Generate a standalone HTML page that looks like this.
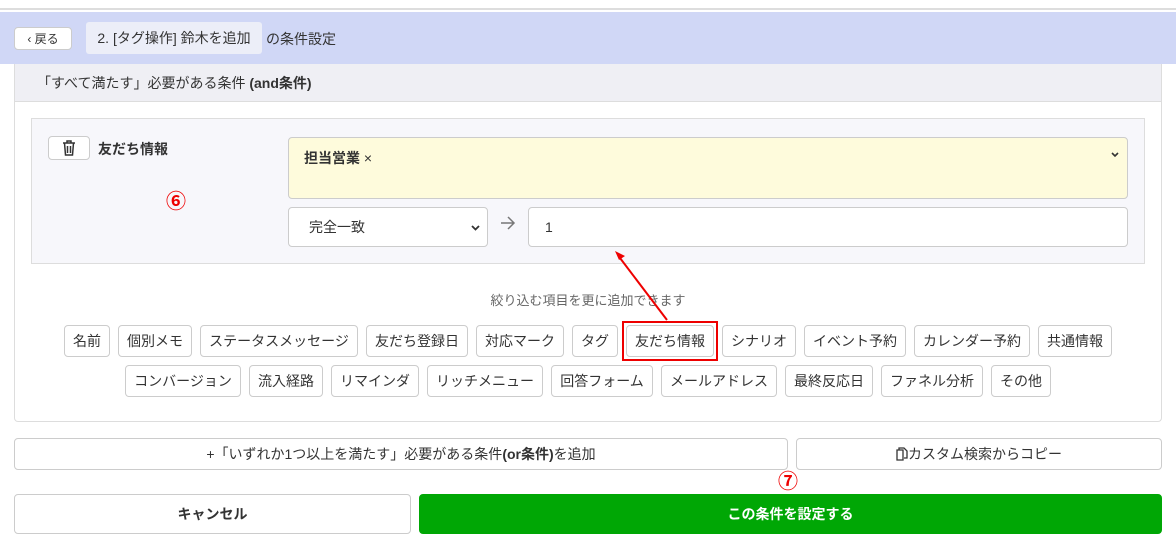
<!DOCTYPE html>
<html><head><meta charset="utf-8"><style>
*{box-sizing:border-box;margin:0;padding:0}
body{width:1176px;height:548px;position:relative;background:#fff;font-family:"Liberation Sans","Noto Sans CJK JP",sans-serif;color:#333;font-size:14px;overflow:hidden}
.a{position:absolute}
.b{position:absolute;border:1px solid #ccc;border-radius:4px;background:#fff;display:flex;align-items:center;justify-content:center;font-size:14px;color:#333}
.t{height:32px}
</style></head><body>
<div class="a" style="left:0;top:8px;width:1176px;height:2px;background:#ddd"></div>
<div class="a" style="left:0;top:12px;width:1176px;height:52px;background:#d0d7f6"></div>
<div class="b" style="left:14px;top:27px;width:58px;height:23px;font-size:12px">‹ 戻る</div>
<div class="a" style="left:86px;top:22px;width:176px;height:32px;background:#eceef8;border-radius:3px;font-size:14px;line-height:32px;text-align:center">2. [タグ操作] 鈴木を追加</div>
<div class="a" style="left:266px;top:29px;font-size:14px">の条件設定</div>

<div class="a" style="left:14px;top:64px;width:1148px;height:358px;border:1px solid #ddd;border-top:none;border-radius:0 0 4px 4px"></div>
<div class="a" style="left:15px;top:64px;width:1146px;height:38px;background:#efeff4;border-bottom:1px solid #ddd;font-size:14px;line-height:38px;padding-left:22px">「すべて満たす」必要がある条件 <b>(and条件)</b></div>
<div class="a" style="left:31px;top:118px;width:1114px;height:146px;background:#f7f7fb;border:1px solid #ddd"></div>
<div class="b" style="left:48px;top:136px;width:42px;height:24px"><svg width="14" height="16" viewBox="0 0 14 16"><path d="M1 3h12M5 3V1h4v2M2.5 3l1 12h7l1-12M5.5 6v7M8.5 6v7" stroke="#333" stroke-width="1.5" fill="none"/></svg></div>
<div class="a" style="left:98px;top:139px;font-weight:bold;font-size:14px">友だち情報</div>
<div class="a" style="left:166px;top:185px;color:#e00;font-size:20px;font-weight:bold">⑥</div>
<div class="a" style="left:288px;top:137px;width:840px;height:62px;background:#fefbdc;border:1px solid #ccc;border-radius:4px"></div>
<div class="a" style="left:304px;top:148px;font-weight:bold;font-size:14px">担当営業<span style="font-weight:normal"> ×</span></div>
<svg class="a" style="left:1111px;top:152px" width="8" height="6"><path d="M1 1l3 3 3-3" stroke="#333" stroke-width="1.6" fill="none"/></svg>
<div class="b" style="left:288px;top:207px;width:200px;height:40px;justify-content:flex-start;padding-left:20px">完全一致<svg style="position:absolute;right:7px;top:17px" width="9" height="6"><path d="M1 1l3.5 3.5 3.5-3.5" stroke="#333" stroke-width="1.8" fill="none"/></svg></div>
<svg class="a" style="left:500px;top:216px" width="16" height="14"><path d="M1 7h13M8 1l6 6-6 6" stroke="#777" stroke-width="1.5" fill="none"/></svg>
<div class="b" style="left:528px;top:207px;width:600px;height:40px;justify-content:flex-start;padding-left:16px">1</div>

<div class="a" style="left:0;top:290px;width:1176px;text-align:center;color:#666;font-size:13px">絞り込む項目を更に追加できます</div>

<div class="b t" style="left:64px;top:325px;width:46px">名前</div>
<div class="b t" style="left:118px;top:325px;width:74px">個別メモ</div>
<div class="b t" style="left:200px;top:325px;width:158px">ステータスメッセージ</div>
<div class="b t" style="left:366px;top:325px;width:102px">友だち登録日</div>
<div class="b t" style="left:476px;top:325px;width:88px">対応マーク</div>
<div class="b t" style="left:572px;top:325px;width:46px">タグ</div>
<div class="b t" style="left:626px;top:325px;width:88px">友だち情報</div>
<div class="a" style="left:622px;top:321px;width:96px;height:40px;border:2px solid #e00"></div>
<div class="b t" style="left:722px;top:325px;width:74px">シナリオ</div>
<div class="b t" style="left:804px;top:325px;width:102px">イベント予約</div>
<div class="b t" style="left:914px;top:325px;width:116px">カレンダー予約</div>
<div class="b t" style="left:1038px;top:325px;width:74px">共通情報</div>

<div class="b t" style="left:125px;top:365px;width:116px">コンバージョン</div>
<div class="b t" style="left:249px;top:365px;width:74px">流入経路</div>
<div class="b t" style="left:331px;top:365px;width:88px">リマインダ</div>
<div class="b t" style="left:427px;top:365px;width:116px">リッチメニュー</div>
<div class="b t" style="left:551px;top:365px;width:102px">回答フォーム</div>
<div class="b t" style="left:661px;top:365px;width:116px">メールアドレス</div>
<div class="b t" style="left:785px;top:365px;width:88px">最終反応日</div>
<div class="b t" style="left:881px;top:365px;width:102px">ファネル分析</div>
<div class="b t" style="left:991px;top:365px;width:60px">その他</div>

<svg class="a" style="left:0;top:0" width="1176" height="548"><line x1="667" y1="320" x2="620" y2="258" stroke="#e00" stroke-width="2"/><path d="M615 251l10 5-6 4z" fill="#e00"/></svg>

<div class="b" style="left:14px;top:438px;width:774px;height:32px">+「いずれか1つ以上を満たす」必要がある条件<b>(or条件)</b>を追加</div>
<div class="b" style="left:796px;top:438px;width:366px;height:32px"><svg width="12" height="14" viewBox="0 0 12 14"><path d="M3 3V1h5l3 3v7H8M1 3h6v10H1z" stroke="#333" stroke-width="1.3" fill="none"/></svg>カスタム検索からコピー</div>
<div class="a" style="left:778px;top:465px;color:#e00;font-size:20px;font-weight:bold">⑦</div>
<div class="b" style="left:14px;top:494px;width:397px;height:40px;font-weight:bold">キャンセル</div>
<div class="b" style="left:419px;top:494px;width:743px;height:40px;background:#00a705;border-color:#00a705;color:#fff;font-weight:bold">この条件を設定する</div>
</body></html>
